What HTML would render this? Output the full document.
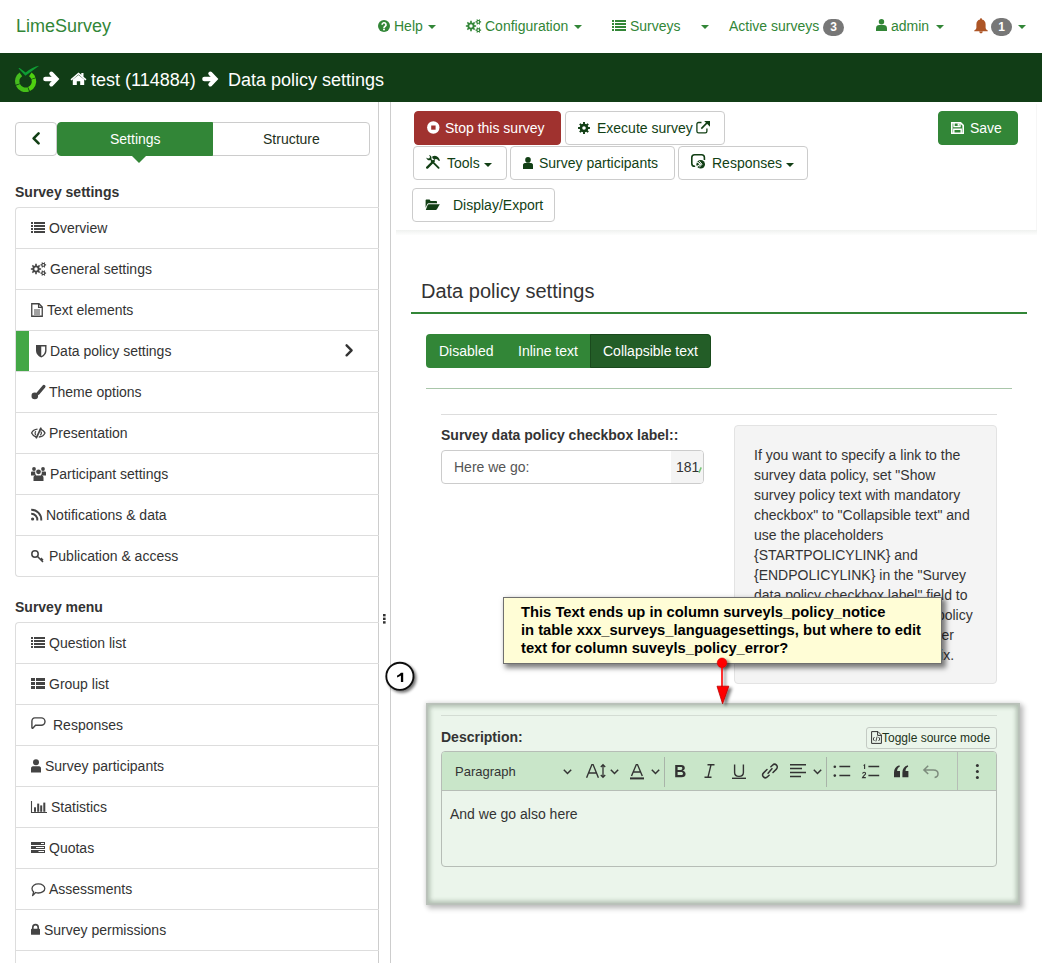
<!DOCTYPE html><html><head><meta charset="utf-8"><style>
*{box-sizing:border-box;margin:0;padding:0}
html,body{width:1042px;height:963px;overflow:hidden;background:#fff;font-family:"Liberation Sans",sans-serif;color:#333;font-size:14px}
.a{position:absolute}
.t14{position:absolute;font-size:14px;line-height:20px;white-space:nowrap}
svg{display:block;position:absolute;overflow:visible}
.nav{color:#328637}
.caret{position:absolute;width:0;height:0;border-left:4px solid transparent;border-right:4px solid transparent;border-top:4px solid #328637}
.badge{position:absolute;background:#777;color:#fff;font-weight:bold;font-size:12px;line-height:17px;text-align:center;border-radius:9px}
.bc{position:absolute;color:#fff;font-size:18px;line-height:24px;white-space:nowrap}
.vline{position:absolute;top:102px;width:1px;height:861px;background:#cdcdcd}
.seg{position:absolute;top:122px;height:34px;border:1px solid #ccc;background:#fff}
.group{position:absolute;left:15px;width:364px;border:1px solid #ddd;border-right:none;border-radius:4px 0 0 4px}
.item{position:relative;height:41px;border-top:1px solid #ddd}
.item:first-child{border-top:none;height:40px}
.item .tx{position:absolute;top:10px;line-height:20px;font-size:14px;color:#333;white-space:nowrap}

.sech{position:absolute;left:15px;font-weight:bold;font-size:14px;line-height:20px;color:#333;white-space:nowrap}
.btn{position:absolute;height:34px;border:1px solid #ccc;border-radius:4px;background:#fff;color:#123f15;font-size:14px;line-height:20px;white-space:nowrap}
.btn .tx{position:absolute;top:6px}
</style></head><body>
<div class="a" style="left:16px;top:14px;font-size:18px;line-height:24px;color:#328637;white-space:nowrap">LimeSurvey</div>
<svg style="left:378px;top:20px" width="12" height="12" viewBox="0 0 12 12" ><circle cx="6" cy="6" r="6" fill="#328637"/><path d="M4.1,4.7a1.95,1.95 0 1,1 2.9,1.7c-.75,.45 -1,.8 -1,1.5" fill="none" stroke="#fff" stroke-width="1.7"/><rect x="5.1" y="8.6" width="1.8" height="1.7" fill="#fff"/></svg>
<div class="t14 nav" style="left:394px;top:16px">Help</div><div class="caret" style="left:428px;top:25px;border-top-color:#328637"></div>
<svg style="left:466px;top:19px" width="16" height="14" viewBox="0 0 16 14" ><path d="M8.61,6.21 10.13,6.16 10.13,7.84 8.61,7.79 8.12,8.99 9.22,10.04 8.04,11.22 6.99,10.12 5.79,10.61 5.84,12.13 4.16,12.13 4.21,10.61 3.01,10.12 1.96,11.22 0.78,10.04 1.88,8.99 1.39,7.79 -0.13,7.84 -0.13,6.16 1.39,6.21 1.88,5.01 0.78,3.96 1.96,2.78 3.01,3.88 4.21,3.39 4.16,1.87 5.84,1.87 5.79,3.39 6.99,3.88 8.04,2.78 9.22,3.96 8.12,5.01ZM6.70,7.00a1.7,1.7 0 1,0 -3.40,0a1.7,1.7 0 1,0 3.40,0ZM14.22,2.33 15.13,2.28 15.13,3.52 14.22,3.47 13.75,4.28 14.25,5.04 13.18,5.66 12.77,4.84 11.83,4.84 11.42,5.66 10.35,5.04 10.85,4.28 10.38,3.47 9.47,3.52 9.47,2.28 10.38,2.33 10.85,1.52 10.35,0.76 11.42,0.14 11.83,0.96 12.77,0.96 13.18,0.14 14.25,0.76 13.75,1.52ZM13.15,2.90a0.85,0.85 0 1,0 -1.70,0a0.85,0.85 0 1,0 1.70,0ZM14.22,10.53 15.13,10.48 15.13,11.72 14.22,11.67 13.75,12.48 14.25,13.24 13.18,13.86 12.77,13.04 11.83,13.04 11.42,13.86 10.35,13.24 10.85,12.48 10.38,11.67 9.47,11.72 9.47,10.48 10.38,10.53 10.85,9.72 10.35,8.96 11.42,8.34 11.83,9.16 12.77,9.16 13.18,8.34 14.25,8.96 13.75,9.72ZM13.15,11.10a0.85,0.85 0 1,0 -1.70,0a0.85,0.85 0 1,0 1.70,0Z" fill="#328637" fill-rule="evenodd"/></svg>
<div class="t14 nav" style="left:485px;top:16px">Configuration</div><div class="caret" style="left:574px;top:25px;border-top-color:#328637"></div>
<svg style="left:612px;top:20px" width="14" height="11" viewBox="0 0 14 11" ><rect x="0" y="0" width="2" height="2" fill="#328637"/><rect x="3" y="0" width="11" height="2" fill="#328637"/><rect x="0" y="3" width="2" height="2" fill="#328637"/><rect x="3" y="3" width="11" height="2" fill="#328637"/><rect x="0" y="6" width="2" height="2" fill="#328637"/><rect x="3" y="6" width="11" height="2" fill="#328637"/><rect x="0" y="9" width="2" height="2" fill="#328637"/><rect x="3" y="9" width="11" height="2" fill="#328637"/></svg>
<div class="t14 nav" style="left:630px;top:16px">Surveys</div><div class="caret" style="left:701px;top:25px;border-top-color:#328637"></div>
<div class="t14 nav" style="left:729px;top:16px">Active surveys</div>
<div class="badge" style="left:823px;top:19px;width:21px;height:17px">3</div>
<svg style="left:876px;top:19px" width="11" height="12" viewBox="0 0 11 12" ><circle cx="5.5" cy="2.7" r="2.7" fill="#328637"/><path d="M0,12V9.2C0,7 1.6,6 3.2,6H7.8C9.4,6 11,7 11,9.2V12Z" fill="#328637"/></svg>
<div class="t14 nav" style="left:891px;top:16px">admin</div><div class="caret" style="left:936px;top:25px;border-top-color:#328637"></div>
<svg style="left:974px;top:18px" width="14" height="15" viewBox="0 0 14 15" ><path d="M7,0.3c.7,0 1,.5 1,1.1c2.3,.5 3.6,2.4 3.6,4.8v3.2c0,1.3 .9,2.2 2.2,3.1v0.8H.2v-.8c1.3-.9 2.2-1.8 2.2-3.1V6.2C2.4,3.8 3.7,1.9 6,1.4C6,.8 6.3,.3 7,.3ZM5.2,13.6h3.6a1.8,1.8 0 0,1 -3.6,0Z" fill="#ad5526"/></svg>
<div class="badge" style="left:991px;top:18px;width:21px;height:18px;line-height:18px">1</div><div class="caret" style="left:1018px;top:25px;border-top-color:#328637"></div>
<div class="a" style="left:0;top:53px;width:1042px;height:49px;background:#113d16"></div>
<svg style="left:14px;top:65px" width="26" height="28" viewBox="0 0 26 28" ><g fill="none" stroke-width="4.5"><path d="M3.66,19.13A8.4,8.4 0 0,1 6.90,9.44" stroke="#46bd1f"/><path d="M14.33,24.34A8.4,8.4 0 0,1 3.93,19.82" stroke="#45bf18"/><path d="M19.63,13.94A8.4,8.4 0 0,1 15.02,24.07" stroke="#4fd00f"/><path d="M16.30,9.44A8.4,8.4 0 0,1 19.39,13.25" stroke="#4fd00f"/></g><path d="M4.4,3.2L11.4,10.8L25.2,.8C21,1.4 16,3.8 11.6,7.6L5.6,2.9Z" fill="#0f9e34"/></svg>
<svg style="left:43px;top:71px" width="16" height="16" viewBox="0 0 16 16" ><path d="M2.4,8H12" fill="none" stroke="#fff" stroke-width="4.4" stroke-linecap="round"/><path d="M8.3,2.5L13.6,8L8.3,13.5" fill="none" stroke="#fff" stroke-width="4" stroke-linecap="round" stroke-linejoin="miter"/></svg>
<svg style="left:70px;top:72px" width="17" height="13" viewBox="0 0 17 13" ><path d="M8.5,0.5L0.5,7.3L1.6,8.5L8.5,2.6L15.4,8.5L16.5,7.3L13.5,4.7V1H11.3V2.8Z" fill="#fff"/><path d="M2.8,7.6L8.5,2.9L14.2,7.6V13H10.2V9.2H6.8V13H2.8Z" fill="#fff"/></svg>
<div class="bc" style="left:91px;top:68px">test (114884)</div>
<svg style="left:202px;top:71px" width="16" height="16" viewBox="0 0 16 16" ><path d="M2.4,8H12" fill="none" stroke="#fff" stroke-width="4.4" stroke-linecap="round"/><path d="M8.3,2.5L13.6,8L8.3,13.5" fill="none" stroke="#fff" stroke-width="4" stroke-linecap="round" stroke-linejoin="miter"/></svg>
<div class="bc" style="left:228px;top:68px">Data policy settings</div>
<div class="vline" style="left:378px"></div><div class="vline" style="left:390px"></div>
<div class="seg" style="left:15px;width:42px;border-radius:4px"></div>
<svg style="left:32px;top:132px" width="8" height="13" viewBox="0 0 8 13" ><path d="M6.6,1.3L1.6,6.3L6.6,11.3" fill="none" stroke="#123f15" stroke-width="2.6" stroke-linecap="round" stroke-linejoin="round"/></svg>
<div class="seg" style="left:212px;width:158px;border-radius:0 4px 4px 0"></div>
<div class="seg" style="left:57px;width:156px;background:#328637;border-color:#328637;border-radius:4px 0 0 4px"></div>
<div class="t14" style="left:110px;top:129px;color:#fff">Settings</div>
<div class="t14" style="left:263px;top:129px;color:#1e2f20">Structure</div>
<div class="a" style="left:131px;top:155px;width:0;height:0;border-left:8px solid transparent;border-right:8px solid transparent;border-top:8px solid #328637"></div>
<div class="sech" style="top:182px">Survey settings</div>
<div class="group" style="top:207px"><div class="item"><span class="tx" style="left:33px">Overview</span></div><div class="item"><span class="tx" style="left:34px">General settings</span></div><div class="item"><span class="tx" style="left:31px">Text elements</span></div><div class="item"><span class="tx" style="left:34px">Data policy settings</span></div><div class="item"><span class="tx" style="left:33px">Theme options</span></div><div class="item"><span class="tx" style="left:33px">Presentation</span></div><div class="item"><span class="tx" style="left:34px">Participant settings</span></div><div class="item"><span class="tx" style="left:30px">Notifications &amp; data</span></div><div class="item"><span class="tx" style="left:33px">Publication &amp; access</span></div></div>
<div class="sech" style="top:597px">Survey menu</div>
<div class="group" style="top:622px;height:400px"><div class="item"><span class="tx" style="left:33px">Question list</span></div><div class="item"><span class="tx" style="left:33px">Group list</span></div><div class="item"><span class="tx" style="left:37px">Responses</span></div><div class="item"><span class="tx" style="left:29px">Survey participants</span></div><div class="item"><span class="tx" style="left:35px">Statistics</span></div><div class="item"><span class="tx" style="left:33px">Quotas</span></div><div class="item"><span class="tx" style="left:33px">Assessments</span></div><div class="item"><span class="tx" style="left:28px">Survey permissions</span></div><div class="item"><span class="tx" style="left:0px"></span></div></div>
<div class="a" style="left:16px;top:331px;width:13px;height:40px;background:#43a746"></div>
<svg style="left:345px;top:344px" width="9" height="13" viewBox="0 0 9 13" ><path d="M1.6,1.3L6.6,6.3L1.6,11.3" fill="none" stroke="#333" stroke-width="2.4" stroke-linecap="round" stroke-linejoin="round"/></svg>
<svg style="left:31px;top:222px" width="14" height="11" viewBox="0 0 14 11" ><rect x="0" y="0" width="2" height="2" fill="#444"/><rect x="3" y="0" width="11" height="2" fill="#444"/><rect x="0" y="3" width="2" height="2" fill="#444"/><rect x="3" y="3" width="11" height="2" fill="#444"/><rect x="0" y="6" width="2" height="2" fill="#444"/><rect x="3" y="6" width="11" height="2" fill="#444"/><rect x="0" y="9" width="2" height="2" fill="#444"/><rect x="3" y="9" width="11" height="2" fill="#444"/></svg>
<svg style="left:31px;top:262px" width="16" height="14" viewBox="0 0 16 14" ><path d="M8.61,6.21 10.13,6.16 10.13,7.84 8.61,7.79 8.12,8.99 9.22,10.04 8.04,11.22 6.99,10.12 5.79,10.61 5.84,12.13 4.16,12.13 4.21,10.61 3.01,10.12 1.96,11.22 0.78,10.04 1.88,8.99 1.39,7.79 -0.13,7.84 -0.13,6.16 1.39,6.21 1.88,5.01 0.78,3.96 1.96,2.78 3.01,3.88 4.21,3.39 4.16,1.87 5.84,1.87 5.79,3.39 6.99,3.88 8.04,2.78 9.22,3.96 8.12,5.01ZM6.70,7.00a1.7,1.7 0 1,0 -3.40,0a1.7,1.7 0 1,0 3.40,0ZM14.22,2.33 15.13,2.28 15.13,3.52 14.22,3.47 13.75,4.28 14.25,5.04 13.18,5.66 12.77,4.84 11.83,4.84 11.42,5.66 10.35,5.04 10.85,4.28 10.38,3.47 9.47,3.52 9.47,2.28 10.38,2.33 10.85,1.52 10.35,0.76 11.42,0.14 11.83,0.96 12.77,0.96 13.18,0.14 14.25,0.76 13.75,1.52ZM13.15,2.90a0.85,0.85 0 1,0 -1.70,0a0.85,0.85 0 1,0 1.70,0ZM14.22,10.53 15.13,10.48 15.13,11.72 14.22,11.67 13.75,12.48 14.25,13.24 13.18,13.86 12.77,13.04 11.83,13.04 11.42,13.86 10.35,13.24 10.85,12.48 10.38,11.67 9.47,11.72 9.47,10.48 10.38,10.53 10.85,9.72 10.35,8.96 11.42,8.34 11.83,9.16 12.77,9.16 13.18,8.34 14.25,8.96 13.75,9.72ZM13.15,11.10a0.85,0.85 0 1,0 -1.70,0a0.85,0.85 0 1,0 1.70,0Z" fill="#444" fill-rule="evenodd"/></svg>
<svg style="left:31px;top:303px" width="12" height="14" viewBox="0 0 12 14" ><path d="M.75,.75H8L11.25,4V13.25H.75Z M7.6,.75V4.4H11.25 " fill="none" stroke="#444" stroke-width="1.3"/><path d="M3,7H9M3,9H9M3,11H9" fill="none" stroke="#444" stroke-width="1"/></svg>
<svg style="left:36px;top:345px" width="11" height="12" viewBox="0 0 11 12" ><path d="M0,0H10.5V5.5C10.5,9 8,11.3 5.25,12.6C2.5,11.3 0,9 0,5.5Z" fill="#444"/><path d="M5.25,1.4H9.1V5.5C9.1,8.2 7.2,10 5.25,11.1Z" fill="#fff"/></svg>
<svg style="left:31px;top:385px" width="15" height="15" viewBox="0 0 15 15" ><circle cx="3.8" cy="10.9" r="3.3" fill="#444"/><path d="M7.2,8.2L12.9,1.5" stroke="#444" stroke-width="3.3" stroke-linecap="round"/></svg>
<svg style="left:31px;top:427px" width="15" height="12" viewBox="0 0 15 12" ><path d="M6.5,2.2C3.6,2.5 1.4,4.2 .6,6C1.6,8.3 3.6,9.6 5.2,10 M8.6,2.1C11,2.5 13.2,4 14,6C13,8.3 10.5,9.9 7.8,10" fill="none" stroke="#444" stroke-width="1.3"/><path d="M10.2,.6L5.1,11.4" stroke="#444" stroke-width="1.7"/><path d="M5,4.2C3.8,5 3.8,7 4.8,8" fill="none" stroke="#444" stroke-width="1.2"/><path d="M9.6,4.4C10.8,5.2 10.7,7.2 9.2,8.2" fill="none" stroke="#444" stroke-width="1.2"/></svg>
<svg style="left:31px;top:467px" width="15" height="14" viewBox="0 0 15 14" ><circle cx="3" cy="2" r="1.9" fill="#444"/><circle cx="12" cy="2" r="1.9" fill="#444"/><circle cx="7.5" cy="4.8" r="2.4" fill="#444"/><path d="M0,8.5V5.6C0,4.8 .5,4.4 1.2,4.4H4.4C3.9,6 4.3,7.6 5.3,8.5Z M15,8.5V5.6C15,4.8 14.5,4.4 13.8,4.4H10.6C11.1,6 10.7,7.6 9.7,8.5Z M2.5,14V10.6C2.5,9.5 3.3,8.6 4.4,8.6H10.6C11.7,8.6 12.5,9.5 12.5,10.6V14Z" fill="#444"/></svg>
<svg style="left:31px;top:509px" width="12" height="12" viewBox="0 0 12 12" ><circle cx="1.6" cy="10" r="1.6" fill="#444"/><path d="M.2,4.8A6,6 0 0,1 6.3,11.5 M.2,.8A10,10 0 0,1 10.3,11.5" fill="none" stroke="#444" stroke-width="1.9"/></svg>
<svg style="left:31px;top:550px" width="14" height="13" viewBox="0 0 14 13" ><circle cx="4" cy="4" r="3.2" fill="none" stroke="#444" stroke-width="1.5"/><path d="M6.3,6.3L12,12M9.9,8.1L12,10.2" fill="none" stroke="#444" stroke-width="1.6"/></svg>
<svg style="left:31px;top:637px" width="14" height="11" viewBox="0 0 14 11" ><rect x="0" y="0" width="2" height="2" fill="#444"/><rect x="3" y="0" width="11" height="2" fill="#444"/><rect x="0" y="3" width="2" height="2" fill="#444"/><rect x="3" y="3" width="11" height="2" fill="#444"/><rect x="0" y="6" width="2" height="2" fill="#444"/><rect x="3" y="6" width="11" height="2" fill="#444"/><rect x="0" y="9" width="2" height="2" fill="#444"/><rect x="3" y="9" width="11" height="2" fill="#444"/></svg>
<svg style="left:31px;top:678px" width="14" height="11" viewBox="0 0 14 11" ><rect x="0" y="0" width="4" height="3" fill="#444"/><rect x="5" y="0" width="9" height="3" fill="#444"/><rect x="0" y="4" width="4" height="3" fill="#444"/><rect x="5" y="4" width="9" height="3" fill="#444"/><rect x="0" y="8" width="4" height="3" fill="#444"/><rect x="5" y="8" width="9" height="3" fill="#444"/></svg>
<svg style="left:31px;top:717px" width="15" height="13" viewBox="0 0 15 13" ><path d="M3.8,.9H10.2C12.4,.9 14,2.6 14,4.6C14,6.6 12.4,8.3 10.2,8.3H4.5L1.8,11.2C1.3,11.7 .9,11 .9,10.6V4.3C.9,2.3 2,.9 3.8,.9Z" fill="none" stroke="#444" stroke-width="1.4"/></svg>
<svg style="left:31px;top:759px" width="10" height="14" viewBox="0 0 10 14" ><circle cx="5" cy="3.3" r="3" fill="#444"/><path d="M0,13.6V9.3C0,8.2 .8,7.2 1.9,7.2H8.1C9.2,7.2 10,8.2 10,9.3V13.6Z" fill="#444"/></svg>
<svg style="left:31px;top:801px" width="16" height="12" viewBox="0 0 16 12" ><path d="M.5,0V11.5H16" fill="none" stroke="#444" stroke-width="1.1"/><rect x="3" y="6.3" width="2" height="4.5" fill="#444"/><rect x="6.2" y="2.6" width="2" height="8.2" fill="#444"/><rect x="9.2" y="4.4" width="2" height="6.4" fill="#444"/><rect x="12.3" y="1.6" width="2" height="9.2" fill="#444"/></svg>
<svg style="left:31px;top:842px" width="14" height="11" viewBox="0 0 14 11" ><rect x="0" y="0" width="14" height="3" fill="#444"/><rect x="10" y="1" width="3" height="1" fill="#fff"/><rect x="0" y="4" width="14" height="3" fill="#444"/><rect x="5" y="5" width="8" height="1" fill="#fff"/><rect x="0" y="8" width="14" height="3" fill="#444"/><rect x="7.5" y="9" width="5.5" height="1" fill="#fff"/></svg>
<svg style="left:31px;top:883px" width="15" height="14" viewBox="0 0 15 14" ><path d="M7.4,.8C11,.8 13.8,2.9 13.8,5.4C13.8,7.9 11,10 7.4,10C6.4,10 5.4,9.8 4.6,9.5L1.6,12.6L2.6,8.8C1.6,8 1,6.8 1,5.4C1,2.9 3.8,.8 7.4,.8Z" fill="none" stroke="#444" stroke-width="1.3" stroke-linejoin="round"/></svg>
<svg style="left:31px;top:924px" width="9" height="11" viewBox="0 0 9 11" ><path d="M1.8,5V3.5C1.8,1.7 3,.6 4.5,.6S7.2,1.7 7.2,3.5V5" fill="none" stroke="#444" stroke-width="1.6"/><rect x="0" y="4.8" width="9" height="6" rx=".6" fill="#444"/></svg>
<div class="a" style="left:396px;top:230px;width:641px;height:5px;background:linear-gradient(#eff1ef,#f8f9f8 60%,#fdfdfd)"></div><div class="a" style="left:1036px;top:104px;width:1px;height:126px;background:#f6f6f6"></div>
<div class="btn" style="left:414px;top:111px;width:147px;background:#a0322f;border-color:#a0322f;color:#fff"><span class="tx" style="left:30px">Stop this survey</span></div>
<svg style="left:427px;top:121px" width="13" height="13" viewBox="0 0 13 13" ><circle cx="6.3" cy="6.5" r="6.2" fill="#fff"/><rect x="4.2" y="4.5" width="4.4" height="4.2" fill="#a0322f"/></svg>
<div class="btn" style="left:565px;top:111px;width:160px"><span class="tx" style="left:31px">Execute survey</span></div>
<svg style="left:578px;top:122px" width="12" height="12" viewBox="0 0 12 12" ><path d="M10.30,5.06 11.92,5.03 11.92,6.97 10.30,6.94 9.71,8.37 10.87,9.50 9.50,10.87 8.37,9.71 6.94,10.30 6.97,11.92 5.03,11.92 5.06,10.30 3.63,9.71 2.50,10.87 1.13,9.50 2.29,8.37 1.70,6.94 0.08,6.97 0.08,5.03 1.70,5.06 2.29,3.63 1.13,2.50 2.50,1.13 3.63,2.29 5.06,1.70 5.03,0.08 6.97,0.08 6.94,1.70 8.37,2.29 9.50,1.13 10.87,2.50 9.71,3.63ZM7.80,6.00a1.8,1.8 0 1,0 -3.60,0a1.8,1.8 0 1,0 3.60,0Z" fill="#123f15" fill-rule="evenodd"/></svg>
<svg style="left:696px;top:121px" width="15" height="13" viewBox="0 0 15 13" ><path d="M5.5,1.5H2.6C1.6,1.5 .9,2.2 .9,3.2V10.2C.9,11.2 1.6,11.9 2.6,11.9H9.3C10.3,11.9 10.9,11.2 10.9,10.2V7.4" fill="none" stroke="#123f15" stroke-width="1.3"/><path d="M5.3,7.6L12,.9" stroke="#123f15" stroke-width="1.6"/><path d="M8.2,0H14V5.8Z" fill="#123f15"/></svg>
<div class="btn" style="left:938px;top:111px;width:80px;background:#328637;border-color:#328637;color:#fff"><span class="tx" style="left:31px">Save</span></div>
<svg style="left:951px;top:122px" width="13" height="12" viewBox="0 0 13 12" ><path d="M.8,.8H9.6L12.2,3.4V11.2H.8Z" fill="none" stroke="#fff" stroke-width="1.6"/><path d="M3,.8V4.6H9V.8" fill="none" stroke="#fff" stroke-width="1.4"/><rect x="6.6" y="1.4" width="1.4" height="2.4" fill="#fff"/><path d="M2.8,11V7.3H10.2V11" fill="none" stroke="#fff" stroke-width="1.4"/></svg>
<div class="btn" style="left:413px;top:146px;width:94px"><span class="tx" style="left:33px">Tools</span></div>
<svg style="left:426px;top:155px" width="14" height="14" viewBox="0 0 14 14" ><path d="M1.2,12.6L7.8,6" stroke="#123f15" stroke-width="2.4" stroke-linecap="round"/><path d="M5.6,5.8L12.6,12.8" stroke="#123f15" stroke-width="1.9" stroke-linecap="round"/><path d="M6.4,1.3L8.9,.7C11.4,.9 13.2,3.2 14,5.4L13,6C11.8,4.6 10.6,3.8 9.6,4L8.7,5.1L6.3,3Z" fill="#123f15"/><path d="M.4,2.4C.4,4.5 2.5,5.8 4.5,5.1L6.1,6.7L7,5.8L5.4,4.2C6.1,2.3 5,.5 3,.1L4.1,2L3.1,3.5L1.3,3.2Z" fill="#123f15"/></svg>
<div class="caret" style="left:484px;top:163px;border-top-color:#123f15"></div>
<div class="btn" style="left:510px;top:146px;width:165px"><span class="tx" style="left:28px">Survey participants</span></div>
<svg style="left:523px;top:157px" width="10" height="12" viewBox="0 0 10 12" ><circle cx="5" cy="2.9" r="2.8" fill="#123f15"/><path d="M0,12V8.2C0,7 .8,6 1.9,6H8.1C9.2,6 10,7 10,8.2V12Z" fill="#123f15"/></svg>
<div class="btn" style="left:678px;top:146px;width:130px"><span class="tx" style="left:33px">Responses</span></div>
<svg style="left:691px;top:154px" width="15" height="15" viewBox="0 0 15 15" ><path d="M4.2,12.2H3.6C2,12.2 .8,11 .8,9.4V3.6C.8,2 2,.8 3.6,.8H10.6C12.2,.8 13.4,2 13.4,3.6V6" fill="none" stroke="#123f15" stroke-width="1.6"/><circle cx="9.7" cy="10.2" r="5.2" fill="#fff"/><circle cx="9.7" cy="10.2" r="4.3" fill="#123f15"/><path d="M5.6,7.6L9.6,10.2L5.6,12.8" fill="none" stroke="#fff" stroke-width="1.1"/><path d="M8.2,7L11,10.2L8.2,13.4" fill="none" stroke="#fff" stroke-width=".9"/></svg>
<div class="caret" style="left:786px;top:163px;border-top-color:#123f15"></div>
<div class="btn" style="left:412px;top:188px;width:143px"><span class="tx" style="left:40px">Display/Export</span></div>
<svg style="left:425px;top:199px" width="15" height="11" viewBox="0 0 15 11" ><path d="M.6,8.8V1.4C.6,.8 1,.4 1.6,.4H4.6L5.6,2H11C11.6,2 12,2.5 12,3.1V4.3H3.6C3,4.3 2.6,4.6 2.3,5.1Z" fill="#123f15"/><path d="M.8,11H10.7C11.2,11 11.6,10.7 11.9,10.3L14.8,5.2H3.8C3.3,5.2 2.9,5.5 2.6,5.9Z" fill="#123f15"/></svg>
<div class="a" style="left:421px;top:279px;font-size:20px;line-height:24px;color:#333;white-space:nowrap">Data policy settings</div>
<div class="a" style="left:411px;top:312px;width:616px;height:2px;background:#328637"></div>
<div class="a" style="left:426px;top:334px;width:285px;height:34px;border-radius:4px;background:#328637;overflow:hidden"><div class="a" style="left:164px;top:0;width:121px;height:34px;background:#235d27;border:1px solid #1a4a1d;border-radius:0 4px 4px 0"></div></div>
<div class="t14" style="left:439px;top:341px;color:#fff">Disabled</div>
<div class="t14" style="left:518px;top:341px;color:#fff">Inline text</div>
<div class="t14" style="left:603px;top:341px;color:#fff">Collapsible text</div>
<div class="a" style="left:426px;top:388px;width:586px;height:1px;background:#a9c6aa"></div>
<div class="a" style="left:441px;top:414px;width:556px;height:1px;background:#ddd"></div>
<div class="t14" style="left:441px;top:425px;font-weight:bold">Survey data policy checkbox label::</div>
<div class="a" style="left:441px;top:450px;width:263px;height:34px;border:1px solid #ccc;border-radius:4px;overflow:hidden"><div class="a" style="left:229px;top:0;width:40px;height:34px;background:#f4f4f4"></div></div>
<div class="t14" style="left:454px;top:457px;color:#555">Here we go:</div>
<div class="t14" style="left:676px;top:457px;color:#333">181</div><svg style="left:698px;top:467px" width="4" height="6" viewBox="0 0 4 6"><path d="M3.2,.4L1,5.6" stroke="#74c474" stroke-width="1.5"/></svg>
<div class="a" style="left:734px;top:425px;width:263px;height:259px;background:#f4f4f4;border:1px solid #e3e3e3;border-radius:4px"></div>
<div class="a" style="left:754px;top:445px;width:224px;font-size:14px;line-height:20px;color:#333">If you want to specify a link to the survey data policy, set "Show survey policy text with mandatory checkbox" to "Collapsible text" and use the placeholders {STARTPOLICYLINK} and {ENDPOLICYLINK} in the "Survey data policy checkbox label" field to define the link that opens the policy popup. If there is no placeholder given, there will be an appendix.</div>
<div class="a" style="left:426px;top:703px;width:594px;height:202px;background:#ebf5eb;box-shadow:inset 0 0 0 2px #b9c1b9,inset 0 0 4px 4px rgba(160,175,160,.75),3px 3px 5px 1px rgba(0,0,0,.2),0 0 4px 1px rgba(0,0,0,.1)"></div>
<div class="a" style="left:441px;top:715px;width:556px;height:1px;background:#d3dcd3"></div>
<div class="t14" style="left:441px;top:727px;font-weight:bold">Description:</div>
<div class="a" style="left:866px;top:727px;width:131px;height:22px;border:1px solid #c4cbc4;border-radius:3px"></div>
<svg style="left:871px;top:731px" width="11" height="13" viewBox="0 0 11 13" ><path d="M.6,.6H7L10.4,4V12.4H.6Z M6.6,.6V4.4H10.4" fill="none" stroke="#333" stroke-width="1"/><path d="M3.4,6L2.2,8L3.4,10 M7.6,6L8.8,8L7.6,10 M6.1,5.6L4.9,10.4" fill="none" stroke="#333" stroke-width=".9"/></svg>
<div class="a" style="left:882px;top:729px;font-size:12px;line-height:18px;color:#1d3320;white-space:nowrap">Toggle source mode</div>
<div class="a" style="left:441px;top:751px;width:556px;height:116px;border:1px solid #b6bdb6;border-radius:4px;overflow:hidden"><div class="a" style="left:0;top:0;width:556px;height:39px;background:#c9e6c9;border-bottom:1px solid #b6bdb6"></div></div>
<div class="a" style="left:455px;top:763px;font-size:13px;line-height:18px;color:#333;white-space:nowrap">Paragraph</div>
<svg style="left:563px;top:769px" width="9" height="6" viewBox="0 0 9 6" ><path d="M.8,.8L4.5,4.5L8.2,.8" fill="none" stroke="#333" stroke-width="1.5"/></svg>
<svg style="left:586px;top:764px" width="20" height="15" viewBox="0 0 20 15" ><path d="M.6,13.8L5.9,.6H7.1L12.4,13.8 M2.6,9H10.4" fill="none" stroke="#333" stroke-width="1.4"/><path d="M17,1V13 M14.8,3L17,.6L19.2,3 M14.8,11L17,13.4L19.2,11" fill="none" stroke="#333" stroke-width="1.3"/></svg>
<svg style="left:610px;top:769px" width="9" height="6" viewBox="0 0 9 6" ><path d="M.8,.8L4.5,4.5L8.2,.8" fill="none" stroke="#333" stroke-width="1.5"/></svg>
<svg style="left:630px;top:764px" width="14" height="16" viewBox="0 0 14 16" ><path d="M1.5,12L6.3,.6H7.5L12.3,12 M3.3,8H10.5" fill="none" stroke="#333" stroke-width="1.4"/><rect x="0" y="13.4" width="14" height="2" fill="#333"/></svg>
<svg style="left:651px;top:769px" width="9" height="6" viewBox="0 0 9 6" ><path d="M.8,.8L4.5,4.5L8.2,.8" fill="none" stroke="#333" stroke-width="1.5"/></svg>
<div class="a" style="left:664px;top:757px;width:1px;height:30px;background:#a9b4a9"></div>
<svg style="left:674px;top:764px" width="13" height="14" viewBox="0 0 13 14" ><path d="M1.2,1H7.2C9.6,1 10.8,2.2 10.8,4C10.8,5.5 9.8,6.4 8.6,6.7C10.3,7 11.6,8.1 11.6,9.9C11.6,12 10,13.2 7.6,13.2H1.2Z M3.6,3.1V5.9H6.8C7.8,5.9 8.3,5.4 8.3,4.5C8.3,3.6 7.8,3.1 6.8,3.1Z M3.6,7.9V11.1H7.1C8.3,11.1 9,10.6 9,9.5C9,8.4 8.3,7.9 7.1,7.9Z" fill="#333" fill-rule="evenodd"/></svg>
<svg style="left:704px;top:764px" width="11" height="14" viewBox="0 0 11 14" ><path d="M3.5,.8H10.5M.5,13.2H7.5M7,.8L4,13.2" fill="none" stroke="#333" stroke-width="1.4"/></svg>
<svg style="left:732px;top:764px" width="14" height="16" viewBox="0 0 14 16" ><path d="M2.6,.6V8.6C2.6,11 4.3,12.4 7,12.4C9.7,12.4 11.4,11 11.4,8.6V.6" fill="none" stroke="#333" stroke-width="1.4"/><rect x="0" y="13.6" width="14" height="1.4" fill="#333"/></svg>
<svg style="left:762px;top:763px" width="15" height="16" viewBox="0 0 15 16" ><path d="M8.4,3.8L10,2.2C11.2,1 12.9,1 14,2.1C15.1,3.2 15.1,4.9 13.9,6.1L10.5,9.5 M6.6,12.2L5,13.8C3.8,15 2.1,15 1,13.9C-.1,12.8 -.1,11.1 1.1,9.9L4.5,6.5 M5.6,10.3L9.4,5.7" fill="none" stroke="#333" stroke-width="1.5" stroke-linecap="round" transform="translate(.5,0)"/></svg>
<svg style="left:790px;top:764px" width="17" height="14" viewBox="0 0 17 14" ><path d="M0,.8H16M0,4.6H12M0,8.4H16M0,12.6H11" fill="none" stroke="#333" stroke-width="1.5"/></svg>
<svg style="left:813px;top:769px" width="9" height="6" viewBox="0 0 9 6" ><path d="M.8,.8L4.5,4.5L8.2,.8" fill="none" stroke="#333" stroke-width="1.5"/></svg>
<div class="a" style="left:826px;top:757px;width:1px;height:30px;background:#a9b4a9"></div>
<svg style="left:833px;top:765px" width="18" height="12" viewBox="0 0 18 12" ><circle cx="1.8" cy="1.8" r="1.3" fill="#333"/><circle cx="1.8" cy="10.6" r="1.3" fill="#333"/><path d="M6.4,1.6H17.2M6.4,10.6H17.2" fill="none" stroke="#333" stroke-width="1.5"/></svg>
<svg style="left:862px;top:764px" width="18" height="15" viewBox="0 0 18 15" ><path d="M1.6,1.6L2.6,.8V5" fill="none" stroke="#333" stroke-width="1.1"/><path d="M.6,9.6C.8,8.7 1.5,8.3 2.2,8.3C3,8.3 3.6,8.8 3.6,9.5C3.6,10.6 1.8,11.4 .6,13.6H3.8" fill="none" stroke="#333" stroke-width="1.1"/><path d="M6.4,2.6H17.2M6.4,11.4H17.2" fill="none" stroke="#333" stroke-width="1.5"/></svg>
<svg style="left:894px;top:765px" width="15" height="13" viewBox="0 0 15 13" ><path d="M0,12.2V7.4C0,3.8 1.8,1.4 5.4,.2L5.8,1.8C4.2,2.5 3.2,3.6 3.1,6H6V12.2Z M8.4,12.2V7.4C8.4,3.8 10.2,1.4 13.8,.2L14.2,1.8C12.6,2.5 11.6,3.6 11.5,6H14.4V12.2Z" fill="#333"/></svg>
<svg style="left:923px;top:765px" width="16" height="13" viewBox="0 0 16 13" ><path d="M5.2,.8L.9,4.9L5.2,9 M.9,4.9H10.4C13.2,4.9 15,6.6 15,8.8C15,11 13.6,12.2 11.6,12.4" fill="none" stroke="#7d8c7d" stroke-width="1.5"/></svg>
<div class="a" style="left:957px;top:752px;width:1px;height:38px;background:#b6bdb6"></div>
<svg style="left:975px;top:764px" width="5" height="15" viewBox="0 0 5 15" ><circle cx="2.4" cy="1.6" r="1.5" fill="#333"/><circle cx="2.4" cy="7.4" r="1.5" fill="#333"/><circle cx="2.4" cy="13.4" r="1.5" fill="#333"/></svg>
<div class="t14" style="left:450px;top:804px;color:#333">And we go also here</div>
<div class="a" style="left:503px;top:597px;width:439px;height:67px;background:#fffdd6;border:1px solid #6f6f6f;box-shadow:3px 3px 5px 1px rgba(0,0,0,.5)"></div>
<div class="a" style="left:521px;top:604px;font-size:14.75px;line-height:17.9px;font-weight:bold;color:#000;white-space:nowrap">This Text ends up in column surveyls_policy_notice<br>in table xxx_surveys_languagesettings, but where to edit<br>text for column suveyls_policy_error?</div>
<svg style="left:712px;top:657px" width="22" height="50" viewBox="0 0 22 50" ><defs><filter id="sh" x="-50%" y="-50%" width="200%" height="200%"><feGaussianBlur in="SourceAlpha" stdDeviation="1.5"/><feOffset dx="3" dy="2"/><feComponentTransfer><feFuncA type="linear" slope=".5"/></feComponentTransfer><feMerge><feMergeNode/><feMergeNode in="SourceGraphic"/></feMerge></filter></defs><g filter="url(#sh)"><circle cx="10" cy="5.8" r="4.8" fill="#f00" stroke="#c00" stroke-width=".6"/><path d="M10,6V30" stroke="#f00" stroke-width="1.6"/><path d="M5,29.2H16.8L10.6,46.8Z" fill="#f00" stroke="#b00" stroke-width=".8"/></g></svg>
<svg style="left:383px;top:614px" width="3" height="10" viewBox="0 0 3 10" ><rect x="0" y="0" width="2.6" height="2.4" fill="#333"/><rect x="0" y="3.6" width="2.6" height="2.4" fill="#333"/><rect x="0" y="7.2" width="2.6" height="2.4" fill="#333"/></svg>
<svg style="left:384px;top:661px" width="32" height="32" viewBox="0 0 32 32" ><defs><filter id="sh2" x="-50%" y="-50%" width="200%" height="200%"><feGaussianBlur in="SourceAlpha" stdDeviation="1.5"/><feOffset dx="2" dy="2"/><feComponentTransfer><feFuncA type="linear" slope=".55"/></feComponentTransfer><feMerge><feMergeNode/><feMergeNode in="SourceGraphic"/></feMerge></filter></defs><circle cx="15.9" cy="15.3" r="13.6" fill="#fff" stroke="#111" stroke-width="1.9" filter="url(#sh2)"/><path d="M16.9,11.7H19.2V21H16.9V14.6C16,15.4 14.6,16.1 13.1,16.5V14.4C14.7,13.9 16.2,12.9 16.9,11.7Z" fill="#000"/></svg>
</body></html>
